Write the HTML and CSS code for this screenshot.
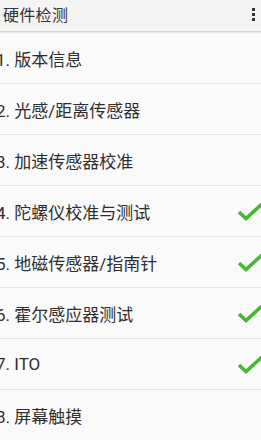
FILE: index.html
```html
<!DOCTYPE html>
<html>
<head>
<meta charset="utf-8">
<link rel="stylesheet" href="styles.css">
</head>
<body>
<div class="app">
  <header class="bar">
    <span class="title">硬件检测</span>
    <span class="menu"><i></i><i></i><i></i></span>
  </header>
  <ul class="list">
    <li class="row"><span class="label">1. 版本信息</span></li>
    <li class="row"><span class="label">2. 光感/距离传感器</span></li>
    <li class="row"><span class="label">3. 加速传感器校准</span></li>
    <li class="row"><span class="label">4. 陀螺仪校准与测试</span><svg class="check" viewBox="0 0 24 18"><path d="M1 9 L8 15.5 L24 1" /></svg></li>
    <li class="row"><span class="label">5. 地磁传感器/指南针</span><svg class="check" viewBox="0 0 24 18"><path d="M1 9 L8 15.5 L24 1" /></svg></li>
    <li class="row"><span class="label">6. 霍尔感应器测试</span><svg class="check" viewBox="0 0 24 18"><path d="M1 9 L8 15.5 L24 1" /></svg></li>
    <li class="row"><span class="label">7. ITO</span><svg class="check" viewBox="0 0 24 18"><path d="M1 9 L8 15.5 L24 1" /></svg></li>
    <li class="row"><span class="label">8. 屏幕触摸</span></li>
  </ul>
</div>
</body>
</html>
```
FILE: styles.css
```css
html, body {
  margin: 0;
  padding: 0;
  background: #fafafa;
  overflow: hidden;
}
.app {
  width: 261px;
  height: 440px;
  overflow: hidden;
  font-family: Roboto, "Noto Sans CJK SC", sans-serif;
  color: #2b2b2b;
}
.bar {
  height: 32px;
  background: #f4f4f4;
  display: flex;
  align-items: center;
  justify-content: space-between;
  padding: 0 6px 4px 3px;
  box-sizing: border-box;
  border-bottom: 1px solid #d6d6d6;
  box-shadow: 0 1px 1px rgba(0,0,0,0.08);
  position: relative;
}
.title {
  font-size: 16px;
  color: #333;
  letter-spacing: 0.3px;
}
.menu {
  display: flex;
  flex-direction: column;
  gap: 2px;
  margin-top: 2px;
}
.menu i {
  width: 3px;
  height: 3px;
  background: #333;
  display: block;
}
.list {
  list-style: none;
  margin: 1px 0 0 0;
  padding: 0;
}
.row {
  height: 50px;
  border-bottom: 1px solid #e2e2e2;
  display: flex;
  align-items: center;
  justify-content: space-between;
  padding: 0 0 0 0;
}
.label {
  font-size: 17px;
  margin-left: -4px;
  color: #2e2e2e;
}
.check {
  width: 24px;
  height: 18px;
  margin-right: -1px;
  margin-top: 1px;
  flex: none;
}
.check path {
  fill: none;
  stroke: #43b92f;
  stroke-width: 3.6;
  stroke-linecap: butt;
  stroke-linejoin: miter;
}
```
